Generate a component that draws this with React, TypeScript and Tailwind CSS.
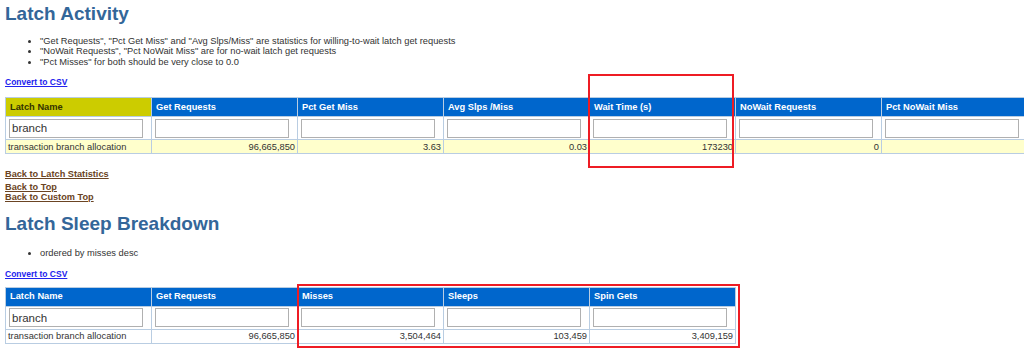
import React from 'react';

const cols1 = [
  'Latch Name',
  'Get Requests',
  'Pct Get Miss',
  'Avg Slps /Miss',
  'Wait Time (s)',
  'NoWait Requests',
  'Pct NoWait Miss',
];
const row1 = ['transaction branch allocation', '96,665,850', '3.63', '0.03', '173230', '0', ''];

const cols2 = ['Latch Name', 'Get Requests', 'Misses', 'Sleeps', 'Spin Gets'];
const row2 = ['transaction branch allocation', '96,665,850', '3,504,464', '103,459', '3,409,159'];

function DataTable({
  cols,
  row,
  highlightFirst,
  rowBg,
}: {
  cols: string[];
  row: string[];
  highlightFirst?: boolean;
  rowBg: string;
}) {
  return (
    <table className="table-fixed border-collapse" style={{ width: cols.length * 146 + 1 }}>
      <colgroup>
        {cols.map((c) => (
          <col key={c} className="w-[146px]" />
        ))}
      </colgroup>
      <thead>
        <tr className="h-[19px]">
          {cols.map((c, i) => (
            <th
              key={c}
              className={
                'border border-[#b9cde2] px-[4px] text-left align-middle text-[9.3px] font-bold leading-[11px] ' +
                (highlightFirst && i === 0 ? 'bg-[#cccc00] text-[#333300]' : 'bg-[#0066cc] text-white')
              }
            >
              {c}
            </th>
          ))}
        </tr>
        <tr className="h-[23px]">
          {cols.map((c, i) => (
            <td key={c} className="border border-[#b9cde2] bg-white px-[3px] py-0 align-middle">
              <input
                readOnly
                value={i === 0 ? 'branch' : ''}
                className="block h-[19px] w-[134px] border border-[#b0b0b0] bg-white px-[2px] text-[11.5px] text-[#333] outline-none"
              />
            </td>
          ))}
        </tr>
      </thead>
      <tbody>
        <tr className={'h-[14px] ' + rowBg}>
          {row.map((v, i) => (
            <td
              key={i}
              className={
                'overflow-visible whitespace-nowrap border border-[#b9cde2] py-0 text-[9.3px] leading-[12px] text-[#333] ' +
                (i === 0 ? 'pl-[2px] text-left' : 'pr-[2px] text-right')
              }
            >
              {v}
            </td>
          ))}
        </tr>
      </tbody>
    </table>
  );
}

export default function App() {
  return (
    <div className="relative h-[350px] w-[1024px] overflow-hidden bg-white pl-[5px] font-['Liberation_Sans',Arial,sans-serif] text-[#333]">
      <h1 className="pt-[3px] text-[19px] font-bold leading-[22px] text-[#336699]">Latch Activity</h1>
      <ul className="mt-[11px] list-disc pl-[35px] text-[9.3px] leading-[10.4px] text-[#333]">
        <li>"Get Requests", "Pct Get Miss" and "Avg Slps/Miss" are statistics for willing-to-wait latch get requests</li>
        <li>"NoWait Requests", "Pct NoWait Miss" are for no-wait latch get requests</li>
        <li>"Pct Misses" for both should be very close to 0.0</li>
      </ul>
      <a href="#" className="mt-[10px] block w-fit text-[8.5px] font-bold leading-[11px] text-[#2222ee] underline">
        Convert to CSV
      </a>
      <div className="mt-[9px]">
        <DataTable cols={cols1} row={row1} highlightFirst rowBg="bg-[#ffffcc]" />
      </div>
      <div className="mt-[15px] flex flex-col text-[9.2px] font-bold leading-[10px] text-[#6b4423]">
        <a href="#" className="w-fit underline">Back to Latch Statistics</a>
        <a href="#" className="mt-[3px] w-fit underline">Back to Top</a>
        <a href="#" className="w-fit underline">Back to Custom Top</a>
      </div>
      <h1 className="mt-[11px] text-[19px] font-bold leading-[22px] text-[#336699]">Latch Sleep Breakdown</h1>
      <ul className="mt-[13px] list-disc pl-[35px] text-[9.3px] leading-[10.4px] text-[#333]">
        <li>ordered by misses desc</li>
      </ul>
      <a href="#" className="mt-[10px] block w-fit text-[8.5px] font-bold leading-[11px] text-[#2222ee] underline">
        Convert to CSV
      </a>
      <div className="mt-[7px]">
        <DataTable cols={cols2} row={row2} rowBg="bg-white" />
      </div>

      <div className="pointer-events-none absolute left-[588px] top-[74px] h-[94px] w-[146px] border-2 border-[#ee1c24]" />
      <div className="pointer-events-none absolute left-[297px] top-[284px] h-[64px] w-[443px] border-2 border-[#ee1c24]" />
    </div>
  );
}
